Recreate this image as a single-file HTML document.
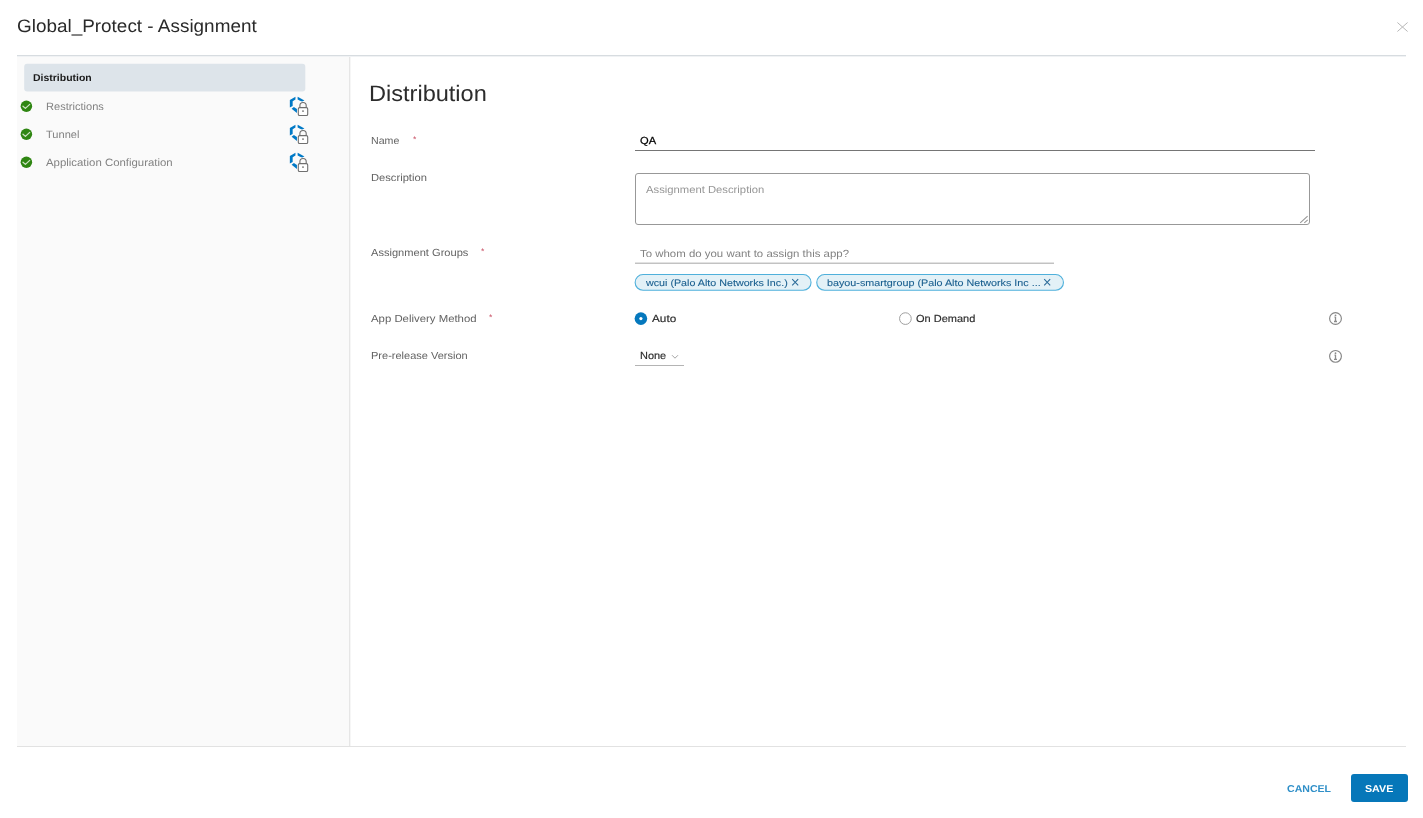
<!DOCTYPE html>
<html lang="en"><head><meta charset="utf-8"><title>Global_Protect - Assignment</title>
<style>
html,body{margin:0;padding:0;background:#fff}
body{width:1423px;height:818px;position:relative;overflow:hidden;font-family:"Liberation Sans",Arial,sans-serif}
.t{position:absolute;white-space:nowrap;text-rendering:geometricPrecision;will-change:transform;transform-origin:0 50%;font-family:"Liberation Sans",Arial,sans-serif}
.abs,svg{position:absolute}
#qa{-webkit-text-stroke:0.25px}
#c1,#c2{-webkit-text-stroke:0.1px}
#auto,#ond,#none{-webkit-text-stroke:0.15px}
#hline{left:17px;top:55px;width:1389px;height:1px;background:#d7dce0;border-bottom:1px solid #f0f2f4;z-index:2}
#side{left:17px;top:56px;width:332px;height:690px;background:#fafafa}
#vline{left:349px;top:56px;width:1px;height:690px;background:#e6e6e6;border-right:1px solid #f6f6f6}
#fline{left:17px;top:746px;width:1389px;height:1px;background:#e2e2e2}
.chk{left:20px}
.hexlock{left:289px}
.info{left:1328px}
.req{color:#c5455a;font-size:8.5px;line-height:10px}
#nline{left:635px;top:150px;width:680px;height:1px;background:#757575}
#ta{left:635px;top:173px;width:673px;height:50px;border:1px solid #989898;border-radius:3px;background:#fff}
#aline{left:635px;top:262px;width:418.5px;height:1px;background:#e2e2e2;border-bottom:1px solid #c2c2c2}
#sline{left:635px;top:365px;width:48.7px;height:1px;background:#b4b4b4}
#savebtn{left:1351px;top:774px;width:56.5px;height:28px;border-radius:3px;background:#0677b9}
#title{left:17.30px;top:15.06px;font-size:18px;font-weight:400;color:#2a2a2a;transform:scaleX(1.0507);line-height:22px}
#s0{left:33.10px;top:73.13px;font-size:10px;font-weight:700;color:#1a1a1a;transform:scaleX(1.0462);line-height:12px}
#s1{left:46.30px;top:100.23px;font-size:10.6px;font-weight:400;color:#828282;transform:scaleX(1.0462);line-height:14px}
#s2{left:46.30px;top:128.23px;font-size:10.6px;font-weight:400;color:#828282;transform:scaleX(1.0437);line-height:14px}
#s3{left:46.30px;top:156.23px;font-size:10.6px;font-weight:400;color:#828282;transform:scaleX(1.0756);line-height:14px}
#h{left:369.20px;top:79.57px;font-size:22.3px;font-weight:400;color:#2c2c2c;transform:scaleX(1.0562);line-height:28px}
#l1{left:371.30px;top:135.63px;font-size:10.3px;font-weight:400;color:#626262;transform:scaleX(1.0303);line-height:12px}
#l2{left:371.30px;top:172.93px;font-size:10.3px;font-weight:400;color:#626262;transform:scaleX(1.0851);line-height:12px}
#l3{left:371.10px;top:248.13px;font-size:10.3px;font-weight:400;color:#626262;transform:scaleX(1.0770);line-height:12px}
#l4{left:371.10px;top:313.63px;font-size:10.3px;font-weight:400;color:#626262;transform:scaleX(1.1049);line-height:12px}
#l5{left:371.10px;top:351.13px;font-size:10.3px;font-weight:400;color:#626262;transform:scaleX(1.0692);line-height:12px}
#qa{left:639.90px;top:135.53px;font-size:10.3px;font-weight:400;color:#000;transform:scaleX(1.0812);line-height:12px}
#ph1{left:646.00px;top:185.43px;font-size:10.3px;font-weight:400;color:#969696;transform:scaleX(1.0936);line-height:12px}
#ph2{left:639.50px;top:249.13px;font-size:10.3px;font-weight:400;color:#828282;transform:scaleX(1.1098);line-height:12px}
#c1{left:645.80px;top:277.08px;font-size:9.3px;font-weight:400;color:#1a5f8f;transform:scaleX(1.1523);line-height:12px}
#c2{left:826.50px;top:277.08px;font-size:9.3px;font-weight:400;color:#1a5f8f;transform:scaleX(1.1585);line-height:12px}
#auto{left:652.10px;top:313.73px;font-size:10.3px;font-weight:400;color:#2a2a2a;transform:scaleX(1.1422);line-height:12px}
#ond{left:915.80px;top:313.53px;font-size:10.3px;font-weight:400;color:#2a2a2a;transform:scaleX(1.0679);line-height:12px}
#none{left:640.00px;top:351.13px;font-size:10.3px;font-weight:400;color:#2a2a2a;transform:scaleX(1.0640);line-height:12px}
#cancel{left:1286.50px;top:784.33px;font-size:10px;font-weight:700;color:#2f8fc8;transform:scaleX(1.0559);line-height:12px}
#save{left:1364.70px;top:784.33px;font-size:10px;font-weight:700;color:#ffffff;transform:scaleX(1.0679);line-height:12px}
</style></head><body>
<div class="abs" id="hline"></div>
<div class="abs" id="side"></div>
<div class="abs" id="vline"></div>
<div class="abs" id="fline"></div>
<svg style="left:20px;top:60px" width="290" height="36" viewBox="0 0 290 36"><rect x="4.2" y="3.8" width="281.1" height="27.7" rx="3" fill="#dde4ea"/></svg>
<span class="t" id="title">Global_Protect - Assignment</span>
<svg id="close" style="left:1396px;top:20px" width="14" height="14" viewBox="0 0 14 14"><path d="M1.4 2.5 L11.6 11.5 M11.6 2.5 L1.4 11.5" stroke="#b9b9b9" stroke-width="1" fill="none"/></svg>
<span class="t" id="s0">Distribution</span><span class="t" id="s1">Restrictions</span><span class="t" id="s2">Tunnel</span><span class="t" id="s3">Application Configuration</span>
<svg class="chk" style="top:100px" width="14" height="14" viewBox="0 0 14 14"><g transform="translate(0.4,0.3)"><circle cx="6" cy="6" r="5.75" fill="#2f8612"/><path d="M2.6 5.9 L5.0 8.1 L9.3 4.1" fill="none" stroke="#cfe3c6" stroke-width="1.25" stroke-linecap="round" stroke-linejoin="round"/></g></svg><svg class="chk" style="top:128px" width="14" height="14" viewBox="0 0 14 14"><g transform="translate(0.4,0.3)"><circle cx="6" cy="6" r="5.75" fill="#2f8612"/><path d="M2.6 5.9 L5.0 8.1 L9.3 4.1" fill="none" stroke="#cfe3c6" stroke-width="1.25" stroke-linecap="round" stroke-linejoin="round"/></g></svg><svg class="chk" style="top:156px" width="14" height="14" viewBox="0 0 14 14"><g transform="translate(0.4,0.3)"><circle cx="6" cy="6" r="5.75" fill="#2f8612"/><path d="M2.6 5.9 L5.0 8.1 L9.3 4.1" fill="none" stroke="#cfe3c6" stroke-width="1.25" stroke-linecap="round" stroke-linejoin="round"/></g></svg>
<svg class="hexlock" style="top:96px" width="22" height="22" viewBox="0 0 22 22"><g transform="translate(0.45,0.2)">
<g fill="#0079c6">
<path d="M6.0 0.6 L6.0 3.4 L3.2 5.1 L3.2 9.9 L0.4 11.4 L0.4 3.8 Z"/>
<path d="M8.2 0.6 L15.0 4.2 L12.6 5.4 L10.6 4.6 L8.2 3.2 Z"/>
<path d="M2.2 12.6 L4.4 10.9 L7.5 12.9 L7.5 16.7 Z"/>
</g>
<g fill="none" stroke="#6f6f6f" stroke-width="1.1">
<rect x="8.85" y="11.45" width="9.4" height="7.8" rx="1.3" fill="#fff"/>
<path d="M10.45 11.4 V9.4 a3.15 3.15 0 0 1 6.3 0 V11.4"/>
</g>
<circle cx="13.55" cy="14.9" r="0.9" fill="#6f6f6f"/>
</g></svg><svg class="hexlock" style="top:124px" width="22" height="22" viewBox="0 0 22 22"><g transform="translate(0.45,0.2)">
<g fill="#0079c6">
<path d="M6.0 0.6 L6.0 3.4 L3.2 5.1 L3.2 9.9 L0.4 11.4 L0.4 3.8 Z"/>
<path d="M8.2 0.6 L15.0 4.2 L12.6 5.4 L10.6 4.6 L8.2 3.2 Z"/>
<path d="M2.2 12.6 L4.4 10.9 L7.5 12.9 L7.5 16.7 Z"/>
</g>
<g fill="none" stroke="#6f6f6f" stroke-width="1.1">
<rect x="8.85" y="11.45" width="9.4" height="7.8" rx="1.3" fill="#fff"/>
<path d="M10.45 11.4 V9.4 a3.15 3.15 0 0 1 6.3 0 V11.4"/>
</g>
<circle cx="13.55" cy="14.9" r="0.9" fill="#6f6f6f"/>
</g></svg><svg class="hexlock" style="top:152px" width="22" height="22" viewBox="0 0 22 22"><g transform="translate(0.45,0.2)">
<g fill="#0079c6">
<path d="M6.0 0.6 L6.0 3.4 L3.2 5.1 L3.2 9.9 L0.4 11.4 L0.4 3.8 Z"/>
<path d="M8.2 0.6 L15.0 4.2 L12.6 5.4 L10.6 4.6 L8.2 3.2 Z"/>
<path d="M2.2 12.6 L4.4 10.9 L7.5 12.9 L7.5 16.7 Z"/>
</g>
<g fill="none" stroke="#6f6f6f" stroke-width="1.1">
<rect x="8.85" y="11.45" width="9.4" height="7.8" rx="1.3" fill="#fff"/>
<path d="M10.45 11.4 V9.4 a3.15 3.15 0 0 1 6.3 0 V11.4"/>
</g>
<circle cx="13.55" cy="14.9" r="0.9" fill="#6f6f6f"/>
</g></svg>
<span class="t" id="h">Distribution</span>
<span class="t" id="l1">Name</span><span class="t req" style="left:412.9px;top:133.5px">*</span>
<span class="t" id="l2">Description</span>
<span class="t" id="l3">Assignment Groups</span><span class="t req" style="left:481.4px;top:246.3px">*</span>
<span class="t" id="l4">App Delivery Method</span><span class="t req" style="left:489.4px;top:311.9px">*</span>
<span class="t" id="l5">Pre-release Version</span>
<span class="t" id="qa">QA</span>
<div class="abs" id="nline"></div>
<div class="abs" id="ta"></div>
<svg style="left:1298px;top:214px" width="12" height="12" viewBox="0 0 12 12"><path d="M2.2 8.8 L9.6 2.2 M6.3 8.8 L9.7 5.9" stroke="#979797" stroke-width="1.1" fill="none"/></svg>
<span class="t" id="ph1">Assignment Description</span>
<span class="t" id="ph2">To whom do you want to assign this app?</span>
<div class="abs" id="aline"></div>
<svg style="left:630px;top:270px" width="440" height="26" viewBox="0 0 440 26"><g fill="#e3f1f7" stroke="#4fb0db" stroke-width="1.1"><rect x="5.15" y="4.55" width="175.9" height="15.75" rx="7.9"/><rect x="186.75" y="4.55" width="246.7" height="15.75" rx="7.9"/></g></svg>
<span class="t" id="c1">wcui (Palo Alto Networks Inc.)</span><span class="t" id="c2">bayou-smartgroup (Palo Alto Networks Inc ...</span>
<svg style="left:790px;top:277px" width="10" height="10" viewBox="0 0 10 10"><path d="M2.2 2.2 L8.2 8.4 M8.2 2.2 L2.2 8.4" stroke="#2a6a98" stroke-width="1.05" fill="none"/></svg>
<svg style="left:1042px;top:277px" width="10" height="10" viewBox="0 0 10 10"><path d="M2.2 2.2 L8.2 8.4 M8.2 2.2 L2.2 8.4" stroke="#2a6a98" stroke-width="1.05" fill="none"/></svg>
<svg style="left:630px;top:308px" width="22" height="22" viewBox="0 0 22 22"><circle cx="10.9" cy="10.6" r="6.3" fill="#0578bd"/><circle cx="10.9" cy="10.6" r="1.6" fill="#fff"/></svg><span class="t" id="auto">Auto</span>
<svg style="left:894px;top:308px" width="22" height="22" viewBox="0 0 22 22"><circle cx="11.4" cy="10.6" r="5.85" fill="#fff" stroke="#a0a0a0" stroke-width="1"/></svg><span class="t" id="ond">On Demand</span>
<span class="t" id="none">None</span>
<svg style="left:670px;top:352px" width="10" height="10" viewBox="0 0 10 10"><path d="M2.0 3.2 L5.0 6.2 L8.0 3.2" stroke="#9a9a9a" stroke-width="0.9" fill="none"/></svg>
<div class="abs" id="sline"></div>
<svg class="info" style="top:311px" width="16" height="16" viewBox="0 0 16 16"><g transform="translate(0.5,0.5)"><circle cx="7" cy="7" r="5.9" fill="#fff" stroke="#868686" stroke-width="1.15"/><circle cx="7" cy="3.9" r="0.9" fill="#8c8c8c"/><path d="M7 5.4 V9.8 M5.5 10.0 H8.5 M6 5.7 H7" stroke="#8c8c8c" stroke-width="1.3" fill="none"/></g></svg><svg class="info" style="top:348px" width="16" height="16" viewBox="0 0 16 16"><g transform="translate(0.5,1.35)"><circle cx="7" cy="7" r="5.9" fill="#fff" stroke="#868686" stroke-width="1.15"/><circle cx="7" cy="3.9" r="0.9" fill="#8c8c8c"/><path d="M7 5.4 V9.8 M5.5 10.0 H8.5 M6 5.7 H7" stroke="#8c8c8c" stroke-width="1.3" fill="none"/></g></svg>
<span class="t" id="cancel">CANCEL</span>
<div class="abs" id="savebtn"></div><span class="t" id="save">SAVE</span>
</body></html>
